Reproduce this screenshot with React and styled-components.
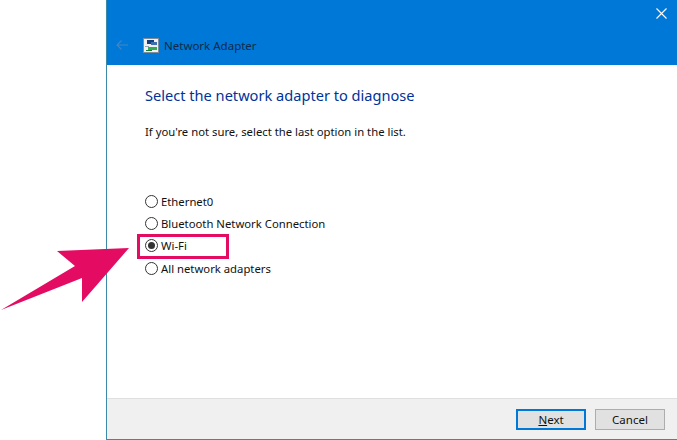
import styled, { createGlobalStyle } from 'styled-components';

const GlobalStyle = createGlobalStyle`
  html, body {
    margin: 0;
    padding: 0;
    background: #fff;
  }
  * {
    box-sizing: border-box;
  }
`;

const Page = styled.div`
  position: relative;
  width: 677px;
  height: 440px;
  padding-left: 106px;
  overflow: hidden;
  background: #fff;
  font-family: 'Noto Sans', 'Open Sans', sans-serif;
  font-size: 11.3px;
  color: #111;
`;

const Win = styled.div`
  display: flex;
  flex-direction: column;
  height: 100%;
  border-left: 1px solid #3c8aa8;
  border-bottom: 1px solid #3c8aa8;
`;

const TitleBar = styled.header`
  display: flex;
  flex-direction: column;
  justify-content: flex-end;
  height: 65px;
  padding: 0 10px 11px 8px;
  background: #0078d7;
`;

const CloseRow = styled.div`
  display: flex;
  justify-content: flex-end;
  margin-bottom: 17px;
`;

const CrumbRow = styled.div`
  display: flex;
  align-items: center;
  gap: 14px;
  height: 18px;
`;

const CrumbTitle = styled.div`
  display: flex;
  align-items: center;
  gap: 5px;
  font-size: 11.5px;
  color: #0f2a4c;
`;

const Content = styled.main`
  flex: 1;
  padding: 20px 0 0 38px;
`;

const Heading = styled.h1`
  margin: 0;
  font-size: 14.6px;
  font-weight: 400;
  line-height: 20px;
  color: #003399;
`;

const Hint = styled.p`
  margin: 18px 0 0;
  line-height: 18px;
`;

const Options = styled.div`
  display: flex;
  flex-direction: column;
  margin-top: 49px;
`;

const Option = styled.label`
  position: relative;
  display: flex;
  align-items: center;
  gap: 3px;
  height: 22.3px;
  white-space: nowrap;

  ${props => props.$marked && `
    &::after {
      content: '';
      box-sizing: border-box;
      position: absolute;
      left: -8px;
      top: -1px;
      width: 92px;
      height: 25px;
      border: 3px solid #e30c62;
    }
  `}
`;

const Radio = styled.span`
  display: flex;
  align-items: center;
  justify-content: center;
  flex: none;
  width: 13px;
  height: 13px;
  border: 1px solid #333;
  border-radius: 50%;
  background: #fff;

  &::before {
    content: '';
    display: ${props => (props.$checked ? 'block' : 'none')};
    width: 7px;
    height: 7px;
    border-radius: 50%;
    background: #333;
  }
`;

const Footer = styled.footer`
  display: flex;
  justify-content: flex-end;
  gap: 9px;
  height: 41px;
  padding: 10px 12px 0 0;
  border-top: 1px solid #dfdfdf;
  background: #f0f0f0;
`;

const Button = styled.button`
  width: 70px;
  height: 21px;
  padding: 0;
  border: ${props => (props.$primary ? '2px solid #0078d7' : '1px solid #adadad')};
  background: #e1e1e1;
  font: inherit;
  font-size: 11.5px;
  color: #111;
`;

const Mnemonic = styled.span`
  text-decoration: underline;
`;

const Arrow = styled.svg`
  position: absolute;
  left: 0;
  top: 240px;
`;

const options = [
  { label: 'Ethernet0' },
  { label: 'Bluetooth Network Connection' },
  { label: 'Wi-Fi', checked: true },
  { label: 'All network adapters' },
];

function AdapterIcon() {
  return (
    <svg width="16" height="15" viewBox="0 0 16 15">
      <rect x="0.5" y="0.5" width="15" height="14" fill="#eef1f4" stroke="#7f8c9b" />
      <rect x="4" y="2" width="7" height="4" fill="#123f7a" />
      <rect x="8" y="4" width="6" height="3" fill="#3d6fb0" />
      <rect x="2" y="8" width="4" height="1" fill="#9aa5b1" />
      <rect x="5" y="9" width="9" height="3" fill="#2fae4e" />
      <rect x="3" y="12" width="6" height="1" fill="#1d7a35" />
    </svg>
  );
}

export default function App() {
  return (
    <Page>
      <GlobalStyle />
      <Win>
        <TitleBar>
          <CloseRow>
            <svg width="11" height="11" viewBox="0 0 11 11">
              <path d="M0.5 0.5L10.5 10.5M10.5 0.5L0.5 10.5" stroke="#fff" strokeWidth="1.1" fill="none" />
            </svg>
          </CloseRow>
          <CrumbRow>
            <svg width="14" height="12" viewBox="0 0 14 12">
              <path d="M13 6H2M6.5 1.5L2 6l4.5 4.5" stroke="#3f88c4" strokeWidth="1.1" fill="none" />
            </svg>
            <CrumbTitle>
              <AdapterIcon />
              Network Adapter
            </CrumbTitle>
          </CrumbRow>
        </TitleBar>
        <Content>
          <Heading>Select the network adapter to diagnose</Heading>
          <Hint>If you're not sure, select the last option in the list.</Hint>
          <Options>
            {options.map(option => (
              <Option key={option.label} $marked={option.checked}>
                <Radio $checked={option.checked} />
                {option.label}
              </Option>
            ))}
          </Options>
        </Content>
        <Footer>
          <Button $primary>
            <Mnemonic>N</Mnemonic>ext
          </Button>
          <Button>Cancel</Button>
        </Footer>
      </Win>
      <Arrow width="130" height="72" viewBox="0 240 130 72">
        <polygon points="129,248 57,251 75,266 1,310 82,278 82,302" fill="#e30c62" />
      </Arrow>
    </Page>
  );
}
